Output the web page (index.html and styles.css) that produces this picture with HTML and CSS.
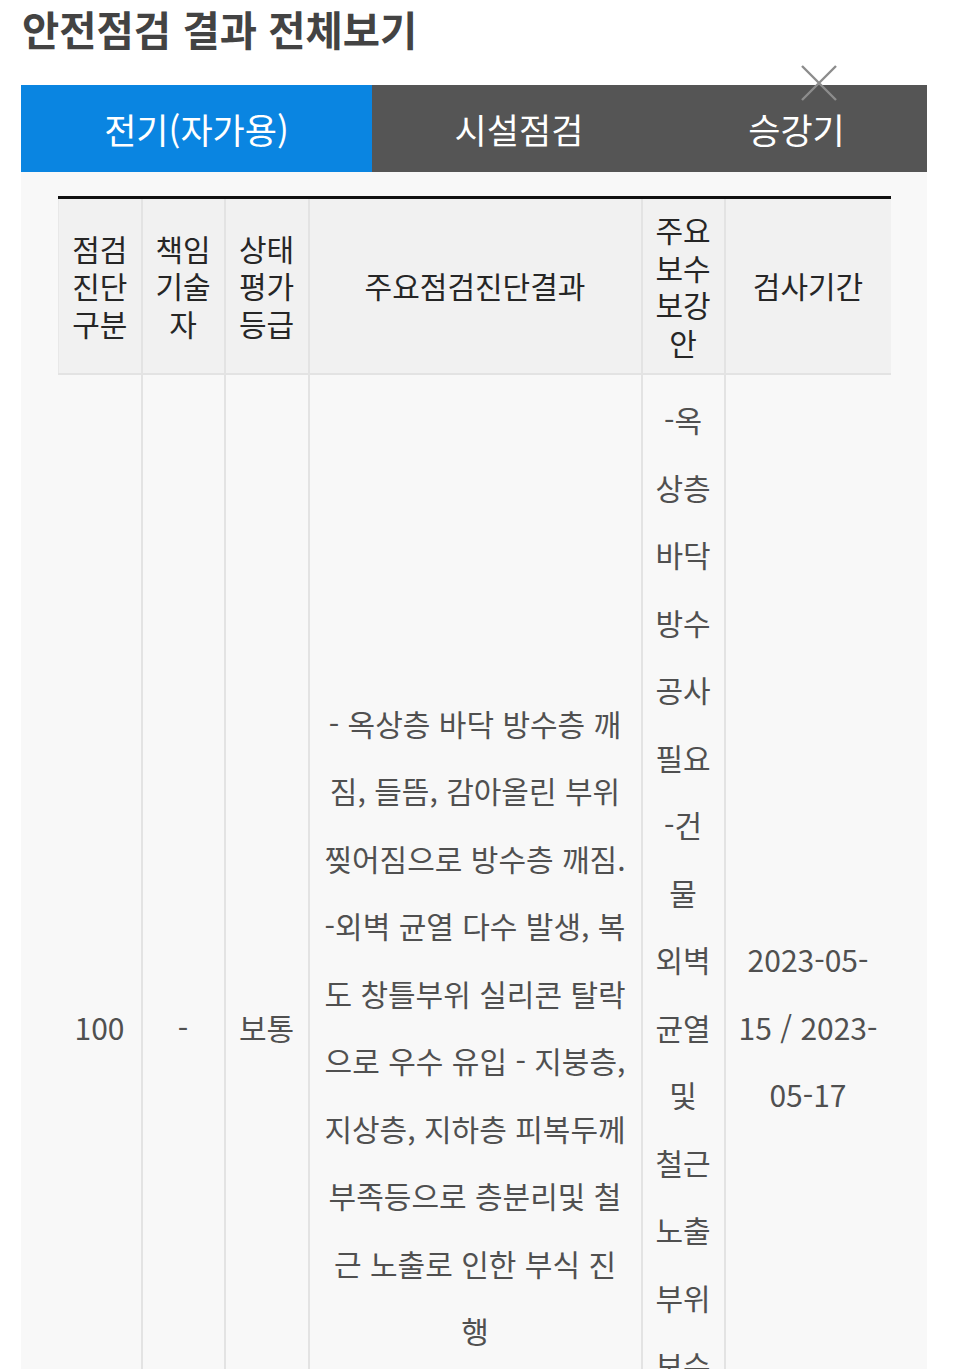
FILE: index.html
```html
<!DOCTYPE html>
<html lang="ko">
<head>
<meta charset="utf-8">
<title>안전점검 결과 전체보기</title>
<link rel="stylesheet" href="styles.css">
</head>
<body>
<h1 class="page-title">안전점검 결과 전체보기</h1>
<div class="panel">
  <button class="close-btn" aria-label="닫기">
    <svg width="38" height="38" viewBox="0 0 38 38"><path d="M2 2 L36 36 M36 2 L2 36" stroke="#8c8c8c" stroke-width="2.4" fill="none"/></svg>
  </button>
  <div class="tabs">
    <div class="tab tab-active tab-1">전기(자가용)</div>
    <div class="tab tab-2">시설점검</div>
    <div class="tab tab-3">승강기</div>
  </div>
  <div class="panel-body">
    <table class="result-table">
      <colgroup>
        <col class="c1"><col class="c2"><col class="c3"><col class="c4"><col class="c5"><col class="c6">
      </colgroup>
      <thead>
        <tr>
          <th>점검진단구분</th>
          <th>책임기술자</th>
          <th>상태평가등급</th>
          <th>주요점검진단결과</th>
          <th>주요보수보강안</th>
          <th>검사기간</th>
        </tr>
      </thead>
      <tbody>
        <tr>
          <td>100</td>
          <td>-</td>
          <td>보통</td>
          <td class="result">- 옥상층 바닥 방수층 깨짐, 들뜸, 감아올린 부위 찢어짐으로 방수층 깨짐. -외벽 균열 다수 발생, 복도 창틀부위 실리콘 탈락으로 우수 유입 - 지붕층, 지상층, 지하층 피복두께 부족등으로 층분리및 철근 노출로 인한 부식 진행</td>
          <td class="narrow">-옥상층 바닥 방수공사 필요 -건물 외벽 균열 및 철근 노출 부위 보수 및 단면 복구 필요</td>
          <td>2023-05-15 / 2023-05-17</td>
        </tr>
      </tbody>
    </table>
  </div>
</div>
</body>
</html>
```
FILE: styles.css
```css
html, body {
  margin: 0;
  padding: 0;
  background: #ffffff;
}
body {
  font-family: "Noto Sans CJK KR", "Noto Sans", sans-serif;
}
.page-title {
  margin: 0;
  padding: 0 22px;
  font-size: 40.5px;
  line-height: 58px;
  font-weight: 700;
  color: #434343;
}
.panel {
  position: relative;
  margin: 27px 0 0 21px;
  width: 906px;
  background: #f8f8f8;
}
.close-btn {
  position: absolute;
  left: 779px;
  top: -21px;
  width: 38px;
  height: 38px;
  padding: 0;
  border: 0;
  background: transparent;
  z-index: 2;
}
.close-btn svg {
  display: block;
}
.tabs {
  display: flex;
  height: 87px;
  background: #555555;
}
.tab {
  display: flex;
  align-items: center;
  justify-content: center;
  color: #ffffff;
  font-size: 35px;
  line-height: 1;
}
.tab-1 { width: 351px; }
.tab-2 { width: 294px; }
.tab-3 { flex: 1; }
.tab-active {
  background: #0a85e1;
}
.panel-body {
  padding: 24px 37px 0;
}
.result-table {
  width: 832px;
  table-layout: fixed;
  border-collapse: collapse;
  border-top: 3px solid #111111;
}
.c1 { width: 83px; }
.c2 { width: 83px; }
.c3 { width: 84px; }
.c4 { width: 333px; }
.c5 { width: 83px; }
.c6 { width: 166px; }
.result-table th {
  background: #f1f1f1;
  color: #262626;
  font-weight: 400;
  font-size: 30px;
  line-height: 37.5px;
  padding: 12px 10px;
  text-align: center;
  vertical-align: middle;
  border-left: 2px solid #e3e3e3;
  border-bottom: 2px solid #e3e3e3;
}
.result-table td {
  background: #f8f8f8;
  color: #505050;
  font-size: 30px;
  line-height: 67.5px;
  padding: 11px 10px;
  text-align: center;
  vertical-align: middle;
  border-left: 2px solid #e3e3e3;
}
.result-table td.result {
  padding-left: 13px;
  padding-right: 13px;
}
.result-table td.narrow {
  padding-left: 12px;
  padding-right: 12px;
}
.result-table th:first-child {
  border-left: 1px solid #e8e8e8;
}
.result-table td:first-child {
  border-left: 0;
}
```
